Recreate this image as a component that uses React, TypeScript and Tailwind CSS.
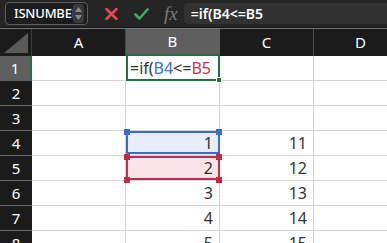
import React from "react";

const ROWS = [1, 2, 3, 4, 5, 6, 7, 8];
const COLS = ["A", "B", "C", "D"];

const data: Record<string, string> = {
  B4: "1", B5: "2", B6: "3", B7: "4", B8: "5",
  C4: "11", C5: "12", C6: "13", C7: "14", C8: "15",
};

function Handle({ pos, color }: { pos: string; color: string }) {
  return <div className={`absolute w-[6px] h-[6px] ${pos} ${color}`} />;
}

export default function App() {
  return (
    <div
      className="w-[387px] h-[243px] overflow-hidden bg-white"
      style={{ fontFamily: '"Noto Sans", "Noto Sans CJK JP", sans-serif' }}
    >
      {/* top bar */}
      <div className="h-[27px] bg-[#252525] flex items-center">
        <div className="ml-[5px] w-[83px] h-[23px] rounded-[4px] border border-[#5e5e5e] bg-[#1d1d1d] flex items-center overflow-hidden">
          <div className="w-[62px] ml-[8px] overflow-hidden whitespace-nowrap text-white text-[13px] leading-none font-medium tracking-[-0.2px]">
            ISNUMBER
          </div>
          <div className="ml-auto mr-[3px] h-[19px] w-[11px] rounded-[3px] bg-[#3a3a3a] flex flex-col items-center justify-center gap-[3px]">
            <svg width="7" height="5" viewBox="0 0 7 5"><path d="M3.5 0 L7 5 L0 5 Z" fill="#8a8a8a" /></svg>
            <svg width="7" height="5" viewBox="0 0 7 5"><path d="M0 0 L7 0 L3.5 5 Z" fill="#8a8a8a" /></svg>
          </div>
        </div>
        <svg className="ml-[17px]" width="13" height="12" viewBox="0 0 13 12">
          <path d="M1.5 1 L11.5 11 M11.5 1 L1.5 11" stroke="#e5484d" strokeWidth="2.6" strokeLinecap="round" />
        </svg>
        <svg className="ml-[16px]" width="15" height="12" viewBox="0 0 15 12">
          <path d="M1.5 6.5 L5.5 10.5 L13.5 1.5" stroke="#3fae5c" strokeWidth="2.6" fill="none" strokeLinecap="round" strokeLinejoin="round" />
        </svg>
        <div
          className="ml-[15px] text-[#7b7b7b] text-[19px] italic leading-none"
          style={{ fontFamily: '"Liberation Serif", "DejaVu Serif", serif' }}
        >
          fx
        </div>
        <div className="ml-[6px] flex-1 h-[21px] rounded-l-[4px] bg-[#323232] flex items-center pl-[7px] text-white text-[14px] font-semibold leading-none">
          =if(B4&lt;=B5
        </div>
      </div>
      <div className="h-[1px] bg-[#151515]" />
      <div className="h-[1px] bg-[#777777]" />

      {/* grid */}
      <div className="grid grid-cols-[32px_94px_94px_94px_94px] grid-rows-[27px_repeat(8,25px)]">
        {/* corner */}
        <div className="bg-[#1b1b1b] border-r border-[#3a3a3a] flex items-end justify-end p-[3px]">
          <svg width="24" height="20" viewBox="0 0 24 20">
            <path d="M24 0 L24 20 L0 20 Z" fill="#5a5a5a" />
          </svg>
        </div>
        {COLS.map((c) => (
          <div
            key={c}
            className={`flex items-center justify-center text-[15px] text-white border-r ${
              c === "B" ? "bg-[#5f5f5f] border-[#5f5f5f] border-b-2 border-b-[#1e7145]" : "bg-[#1b1b1b] border-[#4a4a4a]"
            }`}
          >
            {c}
          </div>
        ))}
        {ROWS.map((r) => (
          <React.Fragment key={r}>
            <div
              className={`flex items-center justify-center text-[15px] text-white border-b ${
                r === 1 ? "bg-[#5f5f5f] border-[#5f5f5f] border-r-2 border-r-[#1e7145]" : "bg-[#1b1b1b] border-[#6a6a6a]"
              }`}
            >
              {r}
            </div>
            {COLS.map((c) => {
              const id = `${c}${r}`;
              const v = data[id];
              if (id === "B1") {
                return (
                  <div key={id} className="relative border-l-2 border-r-2 border-b-2 border-[#1e7145] bg-white flex items-center pl-[2px] text-[16px] text-[#333] whitespace-nowrap">
                    <span>=if(</span>
                    <span className="text-[#3e6ec8]">B4</span>
                    <span>&lt;=</span>
                    <span className="text-[#c83349]">B5</span>
                    <div className="absolute right-[-4px] bottom-[-4px] w-[6px] h-[6px] bg-[#1e7145] border border-white" />
                  </div>
                );
              }
              if (id === "B4" || id === "B5") {
                const blue = id === "B4";
                return (
                  <div
                    key={id}
                    className={`relative border-r border-b border-[#d4d4d4] ${blue ? "bg-[#e7edf9]" : "bg-[#fbe4e7]"}`}
                  >
                    <div
                      className={`absolute left-0 top-0 right-[-1px] ${blue ? "bottom-[1px]" : "bottom-0"} border-2 ${
                        blue ? "border-[#3d6cc6]" : "border-[#b9324a]"
                      }`}
                    />
                    <div className="absolute inset-0 flex items-center justify-end pr-[6px] text-[16px] text-[#333]">
                      {v}
                    </div>
                    <Handle pos="left-[-2px] top-[-2px]" color={blue ? "bg-[#3d6cc6]" : "bg-[#c5283f]"} />
                    <Handle pos="right-[-3px] top-[-2px]" color={blue ? "bg-[#3d6cc6]" : "bg-[#c5283f]"} />
                    {!blue && <Handle pos="left-[-2px] bottom-[-3px]" color="bg-[#c5283f]" />}
                    {!blue && <Handle pos="right-[-3px] bottom-[-3px]" color="bg-[#c5283f]" />}
                  </div>
                );
              }
              return (
                <div
                  key={id}
                  className={`border-r border-b border-[#d4d4d4] flex items-center justify-end pr-[6px] text-[16px] text-[#333] ${
                    c === "A" && r === 1 ? "border-r-0" : ""
                  }`}
                >
                  {v}
                </div>
              );
            })}
          </React.Fragment>
        ))}
      </div>
    </div>
  );
}
